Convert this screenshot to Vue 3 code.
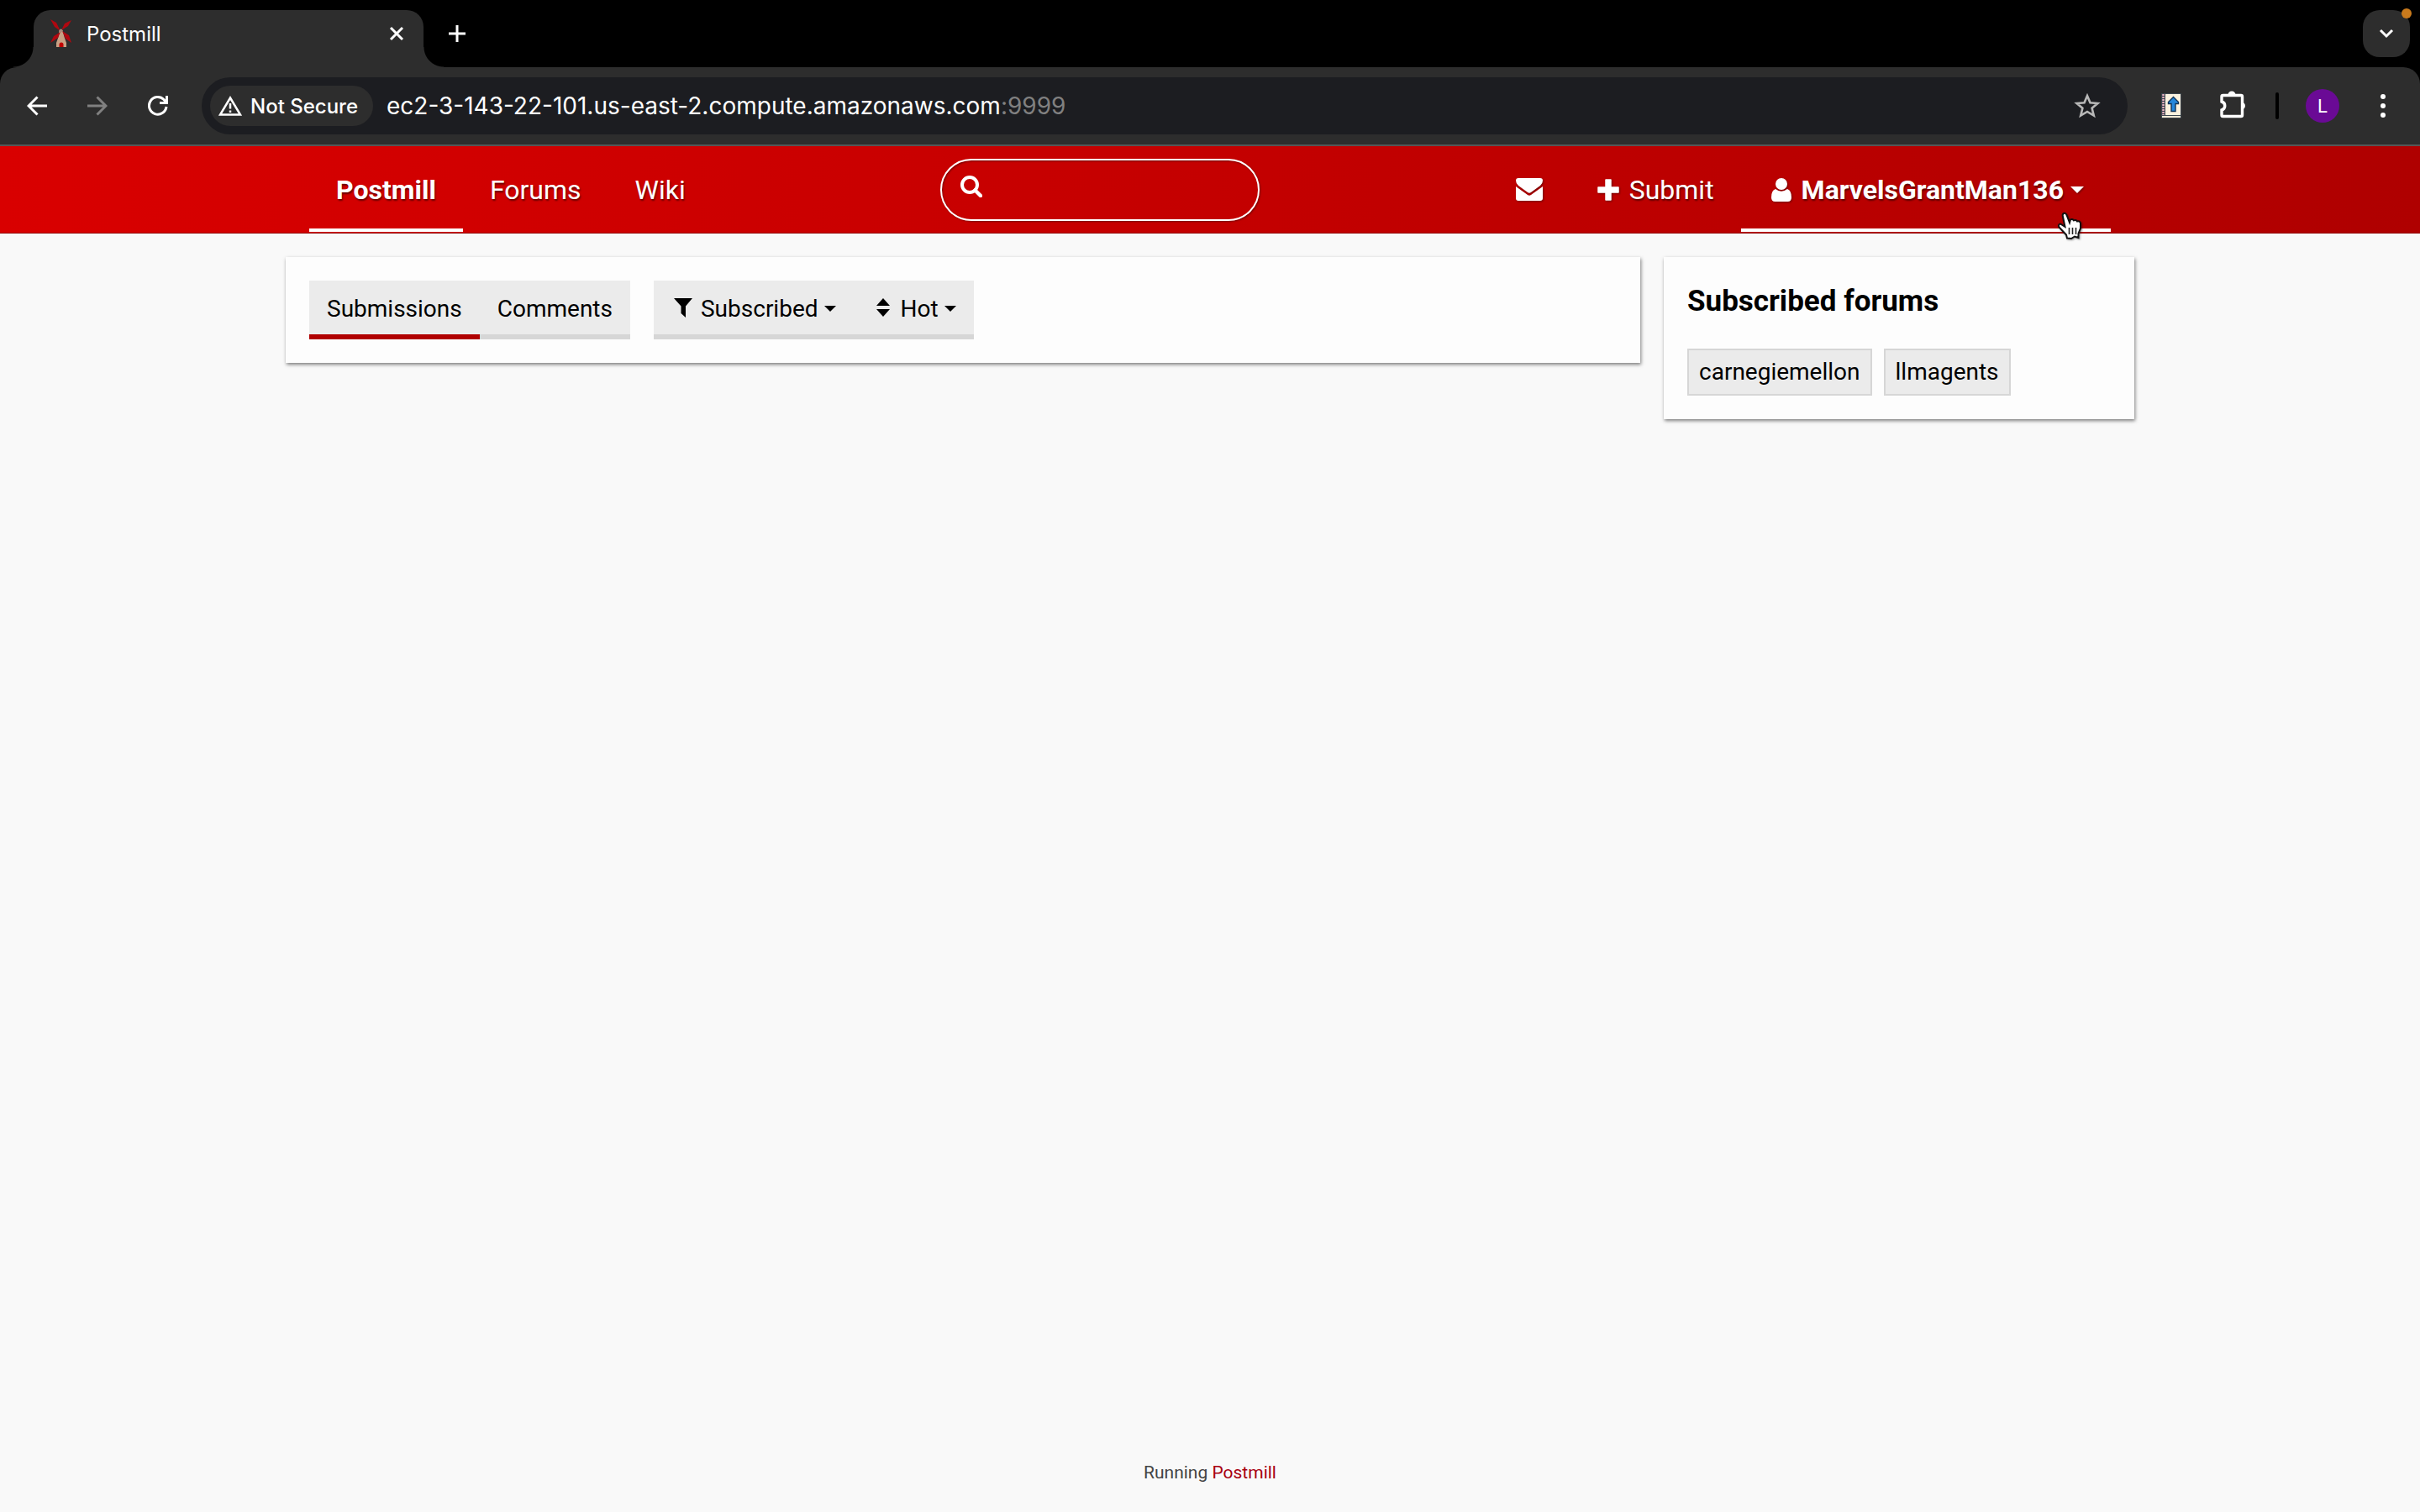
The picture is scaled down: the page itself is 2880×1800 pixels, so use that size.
<script setup>
import { ref } from 'vue'

const url = ref('ec2-3-143-22-101.us-east-2.compute.amazonaws.com')
const query = ref('')
const forums = ['carnegiemellon', 'llmagents']
</script>

<template>
  <div class="window">
    <div class="tabstrip">
      <div class="tab">
        <svg class="favicon" viewBox="0 0 30 34" aria-hidden="true">
          <path d="M12.500 13 L16.500 13 L18.500 21 L21 28 V33 H9 V28 L11.500 21 Z" fill="#c9a184" />
          <path d="M12.500 33 v-3 a2.500 2.500 0 0 1 5 0 v3z" fill="#c00000" />
          <path d="M14 14 L7 9 L2 0 L9 4 Z M15 13 L19 5 L27 1 L23 8 Z M14 15 L11 22 L2 28 L6 20 Z M16 14 L24 19 L27 28 L20 23 Z" fill="#b00810" />
          <circle cx="14.500" cy="13.500" r="2" fill="#a88878" />
        </svg>
        <span class="tab-title">Postmill</span>
        <button class="icon-btn" aria-label="Close tab">
          <svg width="18" height="18" viewBox="0 0 18 18"><path d="M2 2 L16 16 M16 2 L2 16" stroke="#fff" stroke-width="3" /></svg>
        </button>
      </div>
      <button class="icon-btn new-tab" aria-label="New tab">
        <svg width="20" height="20" viewBox="0 0 20 20"><path d="M10 0 V20 M0 10 H20" stroke="#fff" stroke-width="3" /></svg>
      </button>
      <button class="tab-search" aria-label="Search tabs">
        <svg width="18" height="12" viewBox="0 0 18 12"><path d="M2 2 L9 9 L16 2" fill="none" stroke="#fff" stroke-width="3" /></svg>
        <span class="badge"></span>
      </button>
    </div>

    <div class="toolbar">
      <div class="nav-buttons">
        <button class="icon-btn" aria-label="Back">
          <svg width="24" height="24" viewBox="0 0 24 24"><path d="M24 12 H2 M12.500 1.500 L2 12 L12.500 22.500" fill="none" stroke="#fff" stroke-width="3" /></svg>
        </button>
        <button class="icon-btn" aria-label="Forward">
          <svg width="24" height="24" viewBox="0 0 24 24"><path d="M0 12 H22 M11.500 1.500 L22 12 L11.500 22.500" fill="none" stroke="#808080" stroke-width="3" /></svg>
        </button>
        <button class="icon-btn" aria-label="Reload">
          <svg width="24" height="24" viewBox="0 0 24 24"><path d="M22 13 A10.300 10.300 0 1 1 19 4.500 L21 7" fill="none" stroke="#fff" stroke-width="3" /><path d="M22.500 0 V8.500 H14" fill="none" stroke="#fff" stroke-width="3" /></svg>
        </button>
      </div>
      <div class="omnibox">
        <button class="secure">
          <svg width="28" height="24" viewBox="0 0 28 24"><path d="M14 2.500 L26 22.500 H2 Z" fill="none" stroke="#fff" stroke-width="2.500" /><path d="M14 9 V15.500 M14 17.500 V20" stroke="#fff" stroke-width="2.500" /></svg>
          <span>Not Secure</span>
        </button>
        <div class="url" role="textbox" aria-label="Address">{{ url }}<span>:9999</span></div>
        <button class="icon-btn" aria-label="Bookmark">
          <svg width="32" height="32" viewBox="0 0 32 32"><path d="M16 4 L19.500 12.300 L28.500 13 L21.600 18.800 L23.800 27.600 L16 22.900 L8.200 27.600 L10.400 18.800 L3.500 13 L12.500 12.300 Z" fill="none" stroke="#b8b8b8" stroke-width="2.600" /></svg>
        </button>
      </div>
      <div class="extensions">
        <button class="icon-btn" aria-label="Extension">
          <svg width="24" height="30" viewBox="0 0 24 30">
            <rect width="24" height="30" rx="1" fill="#3d4750" />
            <rect x="5" y="1" width="18" height="25" fill="#fbf2df" />
            <rect x="1" y="27" width="22" height="2" fill="#f4ead6" />
            <path d="M2.500 1 V26" stroke="#e8b0c0" stroke-width="2.500" stroke-dasharray="2 1" />
            <path d="M14.500 4.500 L20.500 10.500 V12.500 H17 V21.500 H12 V12.500 H8.500 V10.500 Z" fill="#2487dc" stroke="#123456" stroke-width="1.400" />
          </svg>
        </button>
        <button class="icon-btn" aria-label="Extensions">
          <svg width="32" height="36" viewBox="0 0 32 36">
            <path d="M2 7 Q2 5.500 3.500 5.500 H25 Q26.500 5.500 26.500 7 V29 Q26.500 30.500 25 30.500 H3.500 Q2 30.500 2 29 V23 A5.200 5.200 0 0 0 2 13 Z" fill="none" stroke="#fff" stroke-width="3.400" />
            <path d="M9.500 5 A4.500 4.500 0 0 1 18.500 5 Z M27 14 A4.200 4.200 0 0 1 27 22 Z" fill="#fff" />
          </svg>
        </button>
        <span class="divider"></span>
        <button class="avatar" aria-label="Profile">L</button>
        <button class="icon-btn" aria-label="Menu">
          <svg width="8" height="30" viewBox="0 0 8 30"><circle cx="4" cy="4" r="3" fill="#fff" /><circle cx="4" cy="15" r="3" fill="#fff" /><circle cx="4" cy="26" r="3" fill="#fff" /></svg>
        </button>
      </div>
    </div>

    <header class="site-nav">
      <div class="container nav-inner">
        <nav class="links">
          <a href="#" class="active">Postmill</a>
          <a href="#">Forums</a>
          <a href="#">Wiki</a>
        </nav>
        <form class="search" role="search" @submit.prevent>
          <label for="q" aria-label="Search">
            <svg width="26" height="26" viewBox="0 0 26 26"><circle cx="11" cy="11" r="9" fill="none" stroke="#fff" stroke-width="4" /><path d="M17.500 17.500 L24 24" stroke="#fff" stroke-width="4.500" stroke-linecap="round" /></svg>
          </label>
          <input id="q" v-model="query" type="text" />
        </form>
        <nav class="links">
          <a href="#" aria-label="Messages">
            <svg width="34" height="28" viewBox="0 0 34 28"><path d="M4 0 H30 Q33 0 33 3 Q33 6.500 30 9 L19 17 Q17 18.500 15 17 L4 9 Q1 6.500 1 3 Q1 0 4 0 Z" fill="#fff" /><path d="M1 10 L15 20 Q17 21.500 19 20 L33 10 V24 Q33 27 30 27 H4 Q1 27 1 24 Z" fill="#fff" /></svg>
          </a>
          <a href="#">
            <svg width="26" height="26" viewBox="0 0 26 26"><path d="M10 1 H16 V10 H25 V16 H16 V25 H10 V16 H1 V10 H10 Z" fill="#fff" stroke="#fff" stroke-width="1.500" stroke-linejoin="round" /></svg>
            Submit
          </a>
          <a href="#" class="active user">
            <svg width="24" height="28" viewBox="0 0 24 28"><circle cx="12" cy="7" r="7" fill="#fff" /><path d="M5 13 Q12 18.500 19 13 Q24 14.500 24 23 Q24 28 19.500 28 H4.500 Q0 28 0 23 Q0 14.500 5 13 Z" fill="#fff" /></svg>
            MarvelsGrantMan136
            <svg class="caret" width="16" height="8" viewBox="0 0 16 8"><path d="M0 0 H16 L8 8 Z" fill="#fff" /></svg>
            <svg class="pointer" width="32" height="36" viewBox="0 0 32 36"><path d="M8 2 Q10 1 11.500 4 L15 13 L16 9.500 Q18.500 8 20 10.500 Q22.500 9 24 11.500 Q27 10.500 28 13.500 V20 L25.500 26 V31 L21 29.500 L17 32 L12 31.500 L11 27.500 L2.500 18.500 Q1 15 4 14.500 L9.500 18 L7 6 Q6 3 8 2 Z" fill="#fff" stroke="#111" stroke-width="2" /><path d="M14.500 19 V27 M18.500 19 V27 M22.500 19 V27" stroke="#222" stroke-width="1.600" /></svg>
          </a>
        </nav>
      </div>
    </header>

    <div class="container page">
      <main class="card main">
        <nav class="tabs">
          <a href="#" class="selected">Submissions</a>
          <a href="#">Comments</a>
        </nav>
        <div class="tabs">
          <button>
            <svg width="28" height="24" viewBox="0 0 28 24"><path d="M3 0 H25 L17 9.500 V23 L11.500 18 V9.500 Z" /></svg>
            Subscribed
            <svg class="caret" width="14" height="7" viewBox="0 0 14 7"><path d="M0 0 H14 L7 7 Z" /></svg>
          </button>
          <button>
            <svg width="28" height="24" viewBox="0 0 28 24"><path d="M6 9 L14 0 L22 9 Z M6 13 H22 L14 22 Z" /></svg>
            Hot
            <svg class="caret" width="14" height="7" viewBox="0 0 14 7"><path d="M0 0 H14 L7 7 Z" /></svg>
          </button>
        </div>
      </main>
      <aside class="card side">
        <h2>Subscribed forums</h2>
        <ul>
          <li v-for="f in forums" :key="f"><a href="#">{{ f }}</a></li>
        </ul>
      </aside>
    </div>

    <footer>Running <a href="#">Postmill</a></footer>
  </div>
</template>

<style>
body {
  background: #f9f9f9;
}
</style>

<style scoped>
.window {
  min-height: 100vh;
  display: flex;
  flex-direction: column;
  font-family: Roboto, sans-serif;
  font-size: 28px;
  color: #000;
}
.window * {
  box-sizing: border-box;
}
svg {
  display: block;
  flex: none;
}
a {
  color: inherit;
  text-decoration: none;
}
button {
  font: inherit;
  color: inherit;
  border: 0;
  padding: 0;
  background: none;
}
.tabstrip {
  height: 104px;
  margin-bottom: -24px;
  padding: 12px 12px 24px 40px;
  display: flex;
  background: #000;
  font-family: Inter, sans-serif;
  color: #fff;
}
.tab {
  position: relative;
  width: 464px;
  height: 68px;
  padding: 0 23px 12px 18px;
  display: flex;
  align-items: center;
  background: #2d2d2d;
  border-radius: 20px 20px 0 0;
}
.tab::before,
.tab::after {
  content: '';
  position: absolute;
  bottom: 0;
  width: 24px;
  height: 24px;
}
.tab::before {
  right: 100%;
  background: radial-gradient(circle at 0 0, transparent 23px, #2d2d2d 24px);
}
.tab::after {
  left: 100%;
  background: radial-gradient(circle at 100% 0, transparent 23px, #2d2d2d 24px);
}
.favicon {
  width: 30px;
  height: 34px;
}
.tab-title {
  flex: 1;
  margin-left: 15px;
  font-size: 24px;
}
.icon-btn {
  display: flex;
  align-items: center;
}
.new-tab {
  height: 56px;
  margin-left: 30px;
}
.tab-search {
  position: relative;
  width: 56px;
  height: 56px;
  margin-left: auto;
  display: flex;
  align-items: center;
  justify-content: center;
  background: #2d2d2d;
  border-radius: 20px;
}
.badge {
  position: absolute;
  top: -2px;
  right: -2px;
  width: 12px;
  height: 12px;
  border-radius: 50%;
  background: #c97a1c;
}
.toolbar {
  position: relative;
  height: 94px;
  padding: 0 40px 0 32px;
  display: flex;
  align-items: center;
  background: #2d2d2d;
  border-bottom: 2px solid #565656;
  border-radius: 20px 20px 0 0;
  font-family: Inter, sans-serif;
  color: #fff;
}
.nav-buttons {
  display: flex;
  gap: 48px;
}
.omnibox {
  flex: 1;
  height: 68px;
  margin: 0 40px;
  padding: 0 32px 0 10px;
  display: flex;
  align-items: center;
  background: #1c1d21;
  border-radius: 34px;
}
.secure {
  height: 48px;
  padding: 0 18px 0 10px;
  display: flex;
  align-items: center;
  gap: 10px;
  background: #2d2d2d;
  border-radius: 24px;
  font-size: 24px;
  font-weight: 500;
}
.url {
  flex: 1;
  margin-left: 16px;
  font-size: 28px;
}
.url span {
  color: #808080;
}
.extensions {
  display: flex;
  align-items: center;
}
.extensions .icon-btn + .icon-btn {
  margin-left: 46px;
}
.divider {
  width: 4px;
  height: 32px;
  margin: 0 32px 0 34px;
  border-radius: 2px;
  background: #000;
}
.avatar {
  width: 40px;
  height: 40px;
  margin-right: 48px;
  border-radius: 50%;
  background: #6a0a95;
  font-family: Roboto, sans-serif;
  font-size: 22px;
}
.site-nav {
  background: linear-gradient(to right, #d90000, #af0000);
  border-bottom: 1px solid #900000;
}
.container {
  width: 100%;
  max-width: 2200px;
  margin: 0 auto;
}
.nav-inner {
  display: flex;
  align-items: center;
  justify-content: space-between;
  padding: 0 28px;
  color: #fff;
  font-size: 32px;
}
.links {
  display: flex;
}
.links a {
  position: relative;
  height: 102px;
  margin-bottom: 1px;
  padding: 6px 32px 0;
  display: flex;
  align-items: center;
  gap: 12px;
  border-bottom: 4px solid transparent;
  text-shadow: 1px 2px 2px rgba(0, 0, 0, 0.5);
}
.links svg {
  filter: drop-shadow(1px 1px 1px rgba(0, 0, 0, 0.4));
}
.links .active {
  border-bottom-color: #fff;
  font-weight: 700;
}
.links .user {
  padding-left: 36px;
}
.links .caret {
  margin-left: -4px;
}
.links .pointer {
  position: absolute;
  right: 32px;
  bottom: -16px;
}
.search {
  width: 380px;
  height: 74px;
  display: flex;
  align-items: center;
  border: 2px solid #fff;
  border-radius: 37px;
  box-shadow: 1px 1px 2px rgba(0, 0, 0, 0.4), inset 1px 1px 2px rgba(0, 0, 0, 0.4);
}
.search label {
  padding: 0 12px 8px 22px;
}
.search input {
  flex: 1;
  min-width: 0;
  border: 0;
  outline: 0;
  background: none;
  color: #fff;
  font: inherit;
}
.page {
  display: flex;
  align-items: flex-start;
  gap: 28px;
  padding-top: 28px;
}
.card {
  padding: 28px;
  background: #fdfdfd;
  box-shadow: 1px 2px 4px rgba(0, 0, 0, 0.5);
}
.main {
  flex: 1;
  display: flex;
  gap: 28px;
}
.tabs {
  display: flex;
}
.tabs > * {
  height: 70px;
  padding: 2px 21px 0;
  display: flex;
  align-items: center;
  gap: 7px;
  background: #ebebeb;
  border-bottom: 6px solid #d6d6d6;
}
.tabs .selected {
  border-bottom-color: #b00000;
}
.side {
  width: 560px;
}
h2 {
  margin: 0 0 31px;
  font-size: 35px;
  line-height: 50px;
}
ul {
  display: flex;
  flex-wrap: wrap;
  gap: 14px;
  margin: 0;
  padding: 0;
  list-style: none;
}
li a {
  display: block;
  padding: 0 12px;
  line-height: 52px;
  background: #ebebeb;
  border: 2px solid #d6d6d6;
}
footer {
  margin-top: auto;
  padding-bottom: 31px;
  text-align: center;
  font-size: 21px;
  line-height: 32px;
  color: #444;
}
footer a {
  color: #a80010;
}
</style>
